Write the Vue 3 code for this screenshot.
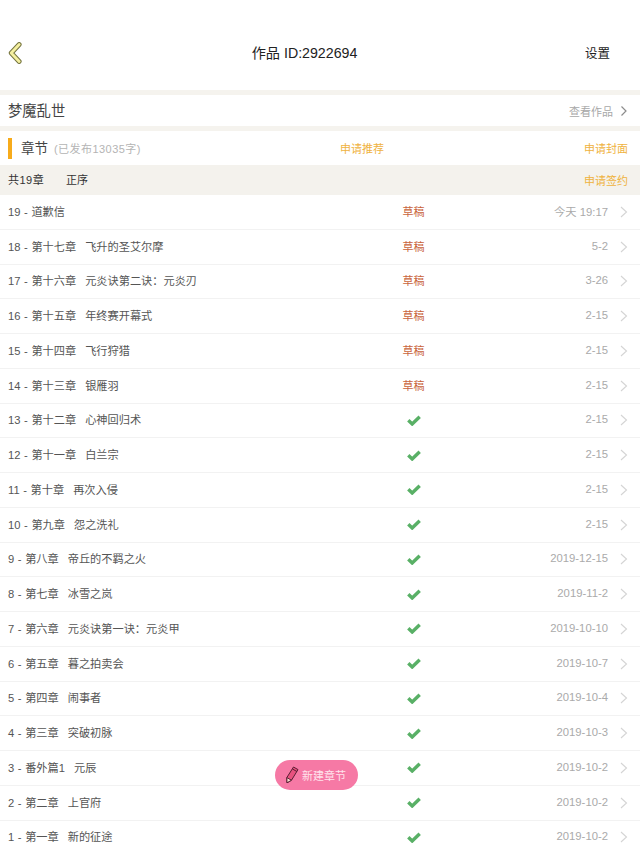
<template>
  <div class="page">
    <header class="topbar">
      <svg class="back" width="14" height="22" viewBox="0 0 14 22">
        <polyline points="11.2,2.5 3.2,11 11.2,19.5" fill="none" stroke="#75743f" stroke-width="4.8" stroke-linecap="round" stroke-linejoin="round" />
        <polyline points="11.2,2.5 3.2,11 11.2,19.5" fill="none" stroke="#f5f0a0" stroke-width="2.8" stroke-linecap="round" stroke-linejoin="round" />
      </svg>
      <div class="title">作品 ID:2922694</div>
      <div class="settings">设置</div>
    </header>

    <div class="work">
      <span class="work-name">梦魔乱世</span>
      <span class="work-link">
        查看作品
        <svg class="arrow" width="8" height="12" viewBox="0 0 8 12">
          <polyline points="1.5,1.5 6,6 1.5,10.5" fill="none" stroke="#8c8c8c" stroke-width="1.2" />
        </svg>
      </span>
    </div>

    <div class="section">
      <div class="section-left">
        <i class="mark"></i>
        <span class="section-name">章节</span>
        <span class="section-count">(已发布13035字)</span>
      </div>
      <span class="apply apply-mid">申请推荐</span>
      <span class="apply">申请封面</span>
    </div>

    <div class="summary">
      <span class="summary-count">共19章</span>
      <span class="summary-sort">正序</span>
      <span class="apply">申请签约</span>
    </div>

    <ul class="list">
      <li v-for="item in chapters" :key="item.no" class="row">
        <div class="row-title">{{ item.no }} - {{ item.part }}<span v-if="item.name" class="row-name">{{ item.name }}</span></div>
        <div class="row-status">
          <span v-if="item.draft" class="draft">草稿</span>
          <svg v-else width="14" height="11" viewBox="0 0 14 11">
            <polyline points="1.3,5.3 5.2,9 12.7,1.8" fill="none" stroke="#59b066" stroke-width="3.4" />
          </svg>
        </div>
        <div class="row-date">{{ item.date }}</div>
        <svg class="row-arrow" width="8" height="12" viewBox="0 0 8 12">
          <polyline points="1,1 6.5,6 1,11" fill="none" stroke="#d4d4d4" stroke-width="1.1" />
        </svg>
      </li>
    </ul>

    <div class="create">
      <svg width="14" height="18" viewBox="0 0 14 18">
        <path d="M8.5 1 L13 3.6 L6.5 14.2 L2 16.8 L1.8 11.6 Z" fill="#e8517f" stroke="#5a1f33" stroke-width="1" stroke-linejoin="round" />
        <path d="M1.8 11.6 L6.5 14.2 L2 16.8 Z" fill="#fbe3d2" stroke="#5a1f33" stroke-width="1" stroke-linejoin="round" />
        <path d="M7.5 3 L12 5.6" fill="none" stroke="#5a1f33" stroke-width="1" />
      </svg>
      <span>新建章节</span>
    </div>
  </div>
</template>

<script setup>
const chapters = [
  { no: 19, part: '道歉信', name: '', draft: true, date: '今天 19:17' },
  { no: 18, part: '第十七章', name: '飞升的圣艾尔摩', draft: true, date: '5-2' },
  { no: 17, part: '第十六章', name: '元炎诀第二诀：元炎刃', draft: true, date: '3-26' },
  { no: 16, part: '第十五章', name: '年终赛开幕式', draft: true, date: '2-15' },
  { no: 15, part: '第十四章', name: '飞行狩猎', draft: true, date: '2-15' },
  { no: 14, part: '第十三章', name: '银雁羽', draft: true, date: '2-15' },
  { no: 13, part: '第十二章', name: '心神回归术', draft: false, date: '2-15' },
  { no: 12, part: '第十一章', name: '白兰宗', draft: false, date: '2-15' },
  { no: 11, part: '第十章', name: '再次入侵', draft: false, date: '2-15' },
  { no: 10, part: '第九章', name: '怨之洗礼', draft: false, date: '2-15' },
  { no: 9, part: '第八章', name: '帝丘的不羁之火', draft: false, date: '2019-12-15' },
  { no: 8, part: '第七章', name: '冰雪之岚', draft: false, date: '2019-11-2' },
  { no: 7, part: '第六章', name: '元炎诀第一诀：元炎甲', draft: false, date: '2019-10-10' },
  { no: 6, part: '第五章', name: '暮之拍卖会', draft: false, date: '2019-10-7' },
  { no: 5, part: '第四章', name: '闹事者', draft: false, date: '2019-10-4' },
  { no: 4, part: '第三章', name: '突破初脉', draft: false, date: '2019-10-3' },
  { no: 3, part: '番外篇1', name: '元辰', draft: false, date: '2019-10-2' },
  { no: 2, part: '第二章', name: '上官府', draft: false, date: '2019-10-2' },
  { no: 1, part: '第一章', name: '新的征途', draft: false, date: '2019-10-2' }
]
</script>

<style>
html,
body {
  margin: 0;
  background: #fff;
  overflow: hidden;
}
</style>

<style scoped>
.page {
  position: relative;
  width: 640px;
  height: 853px;
  overflow: hidden;
  background: #fff;
  font-family: "Liberation Sans", "Noto Sans CJK SC", sans-serif;
  font-size: 11px;
  color: #555;
}

.topbar {
  box-sizing: border-box;
  height: 90px;
  padding: 16px 30px 0 8px;
  display: flex;
  align-items: center;
  justify-content: space-between;
}

.back {
  display: block;
}

.title {
  font-size: 14.2px;
  color: #222;
  margin-left: 2px;
  padding-bottom: 2px;
}

.settings {
  font-size: 12.5px;
  color: #222;
  padding-bottom: 2px;
}

.work {
  box-sizing: border-box;
  height: 36px;
  margin-bottom: 5px;
  padding: 0 12px 0 8px;
  border-top: 5px solid #f5f3ee;
  display: flex;
  align-items: center;
  justify-content: space-between;
}

.work-name {
  font-size: 14.3px;
  color: #444;
  padding-bottom: 2px;
}

.work-link {
  display: flex;
  align-items: center;
  gap: 7px;
  color: #a8a8a8;
}

.section {
  box-sizing: border-box;
  height: 39px;
  padding: 0 12px 0 8px;
  border-top: 5px solid #f5f3ee;
  margin-top: -5px;
  display: flex;
  align-items: center;
}

.section-left {
  width: 332px;
  display: flex;
  align-items: center;
}

.mark {
  width: 4px;
  height: 21px;
  margin-right: 9px;
  background: #f7ab1b;
}

.section-name {
  font-size: 13.5px;
  color: #444;
  margin-right: 6px;
  padding-bottom: 2px;
}

.section-count {
  font-size: 11px;
  letter-spacing: 0.45px;
  color: #b4b4b4;
  padding-bottom: 1px;
}

.apply {
  margin-left: auto;
  font-size: 11px;
  color: #efb23e;
}

.apply-mid {
  margin-left: 0;
}

.summary {
  height: 30px;
  padding: 0 12px 0 8px;
  background: #f4f2ed;
  display: flex;
  align-items: center;
  color: #333;
  font-size: 11px;
}

.summary-count {
  width: 58px;
  letter-spacing: 0.5px;
  padding-bottom: 2px;
}

.summary-sort {
  padding-bottom: 2px;
}

.list {
  margin: 0;
  padding: 0;
  list-style: none;
}

.row {
  box-sizing: border-box;
  height: 34.75px;
  padding: 0 12px 0 8px;
  border-bottom: 1px solid #f2f2f2;
  display: grid;
  grid-template-columns: 376px 60px 1fr 20px;
  align-items: center;
}

.row-title {
  font-size: 11.2px;
  word-spacing: 0.5px;
  padding-bottom: 2px;
}

.row-name {
  margin-left: 9px;
}

.row-status {
  display: flex;
  justify-content: center;
}

.draft {
  margin-right: 1px;
  padding-bottom: 2px;
  color: #c9633b;
}

.row-date {
  padding-bottom: 2px;
  text-align: right;
  color: #aaa;
  font-size: 11.3px;
}

.row-arrow {
  justify-self: end;
}

.create {
  position: absolute;
  left: 275px;
  top: 760px;
  box-sizing: border-box;
  width: 83px;
  height: 30px;
  padding-left: 10px;
  border-radius: 15px;
  background: #f679a5;
  color: #ffe3ec;
  display: flex;
  align-items: center;
  gap: 3px;
}
</style>
